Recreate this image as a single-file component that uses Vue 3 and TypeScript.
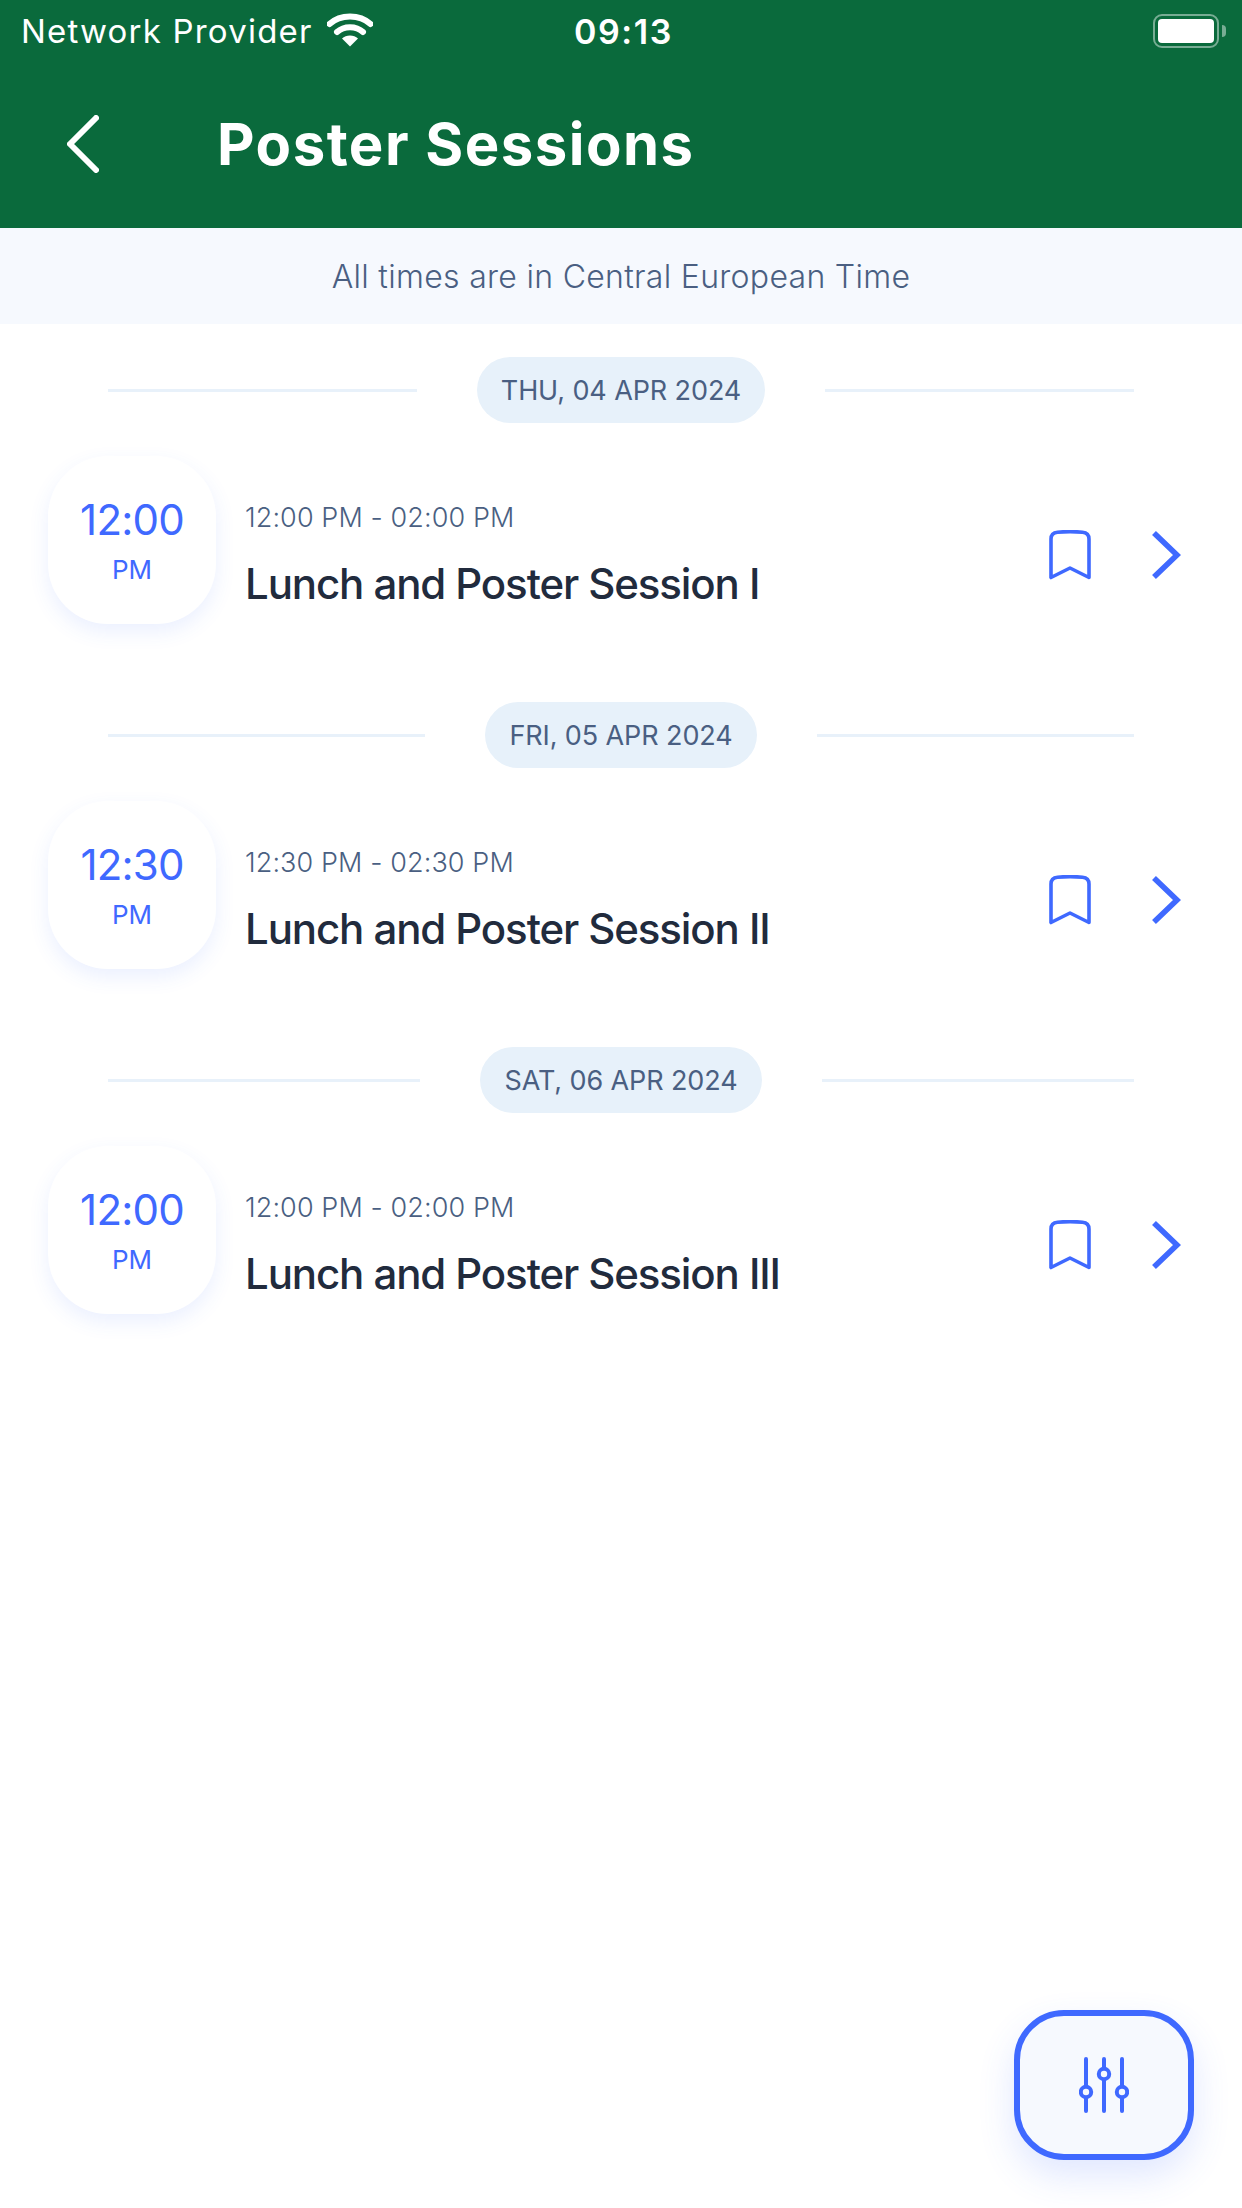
<script setup lang="ts">
interface Session {
  date: string
  hour: string
  range: string
  title: string
}
const sessions: Session[] = [
  { date: 'THU, 04 APR 2024', hour: '12:00', range: '12:00 PM - 02:00 PM', title: 'Lunch and Poster Session I' },
  { date: 'FRI, 05 APR 2024', hour: '12:30', range: '12:30 PM - 02:30 PM', title: 'Lunch and Poster Session II' },
  { date: 'SAT, 06 APR 2024', hour: '12:00', range: '12:00 PM - 02:00 PM', title: 'Lunch and Poster Session III' },
]
</script>

<template>
  <div class="page">
    <header class="header">
      <div class="status">
        <div class="status-left">
          <span class="provider">Network Provider</span>
          <svg class="wifi" width="46" height="34" viewBox="0 0 46 34" fill="none">
            <path d="M2.5 11C13.5 1 32.5 1 43.5 11" stroke="#fff" stroke-width="6" stroke-linecap="round" />
            <path d="M10 19C17 12.5 29 12.5 36 19" stroke="#fff" stroke-width="6" stroke-linecap="round" />
            <path d="M23 33.5L15 25.5C19 21.5 27 21.5 31 25.5Z" fill="#fff" />
          </svg>
        </div>
        <span class="clock">09:13</span>
        <div class="battery">
          <div class="battery-body"><div class="battery-fill"></div></div>
          <div class="battery-nub"></div>
        </div>
      </div>
      <div class="navbar">
        <svg class="back" width="32" height="58" viewBox="0 0 32 58" fill="none">
          <path d="M29 3L3 29L29 55" stroke="#fff" stroke-width="6" stroke-linecap="round" stroke-linejoin="round" />
        </svg>
        <h1 class="title">Poster Sessions</h1>
      </div>
    </header>

    <div class="notice">All times are in Central European Time</div>

    <main class="list">
      <section v-for="s in sessions" :key="s.date" class="group">
        <div class="separator">
          <span class="rule"></span>
          <span class="pill">{{ s.date }}</span>
          <span class="rule"></span>
        </div>
        <div class="row">
          <div class="tile">
            <span class="tile-hour">{{ s.hour }}</span>
            <span class="tile-mer">PM</span>
          </div>
          <div class="info">
            <span class="range">{{ s.range }}</span>
            <span class="name">{{ s.title }}</span>
          </div>
          <div class="actions">
            <svg width="42" height="50" viewBox="0 0 42 50" fill="none">
              <path d="M2 47.5V9C2 4.5 4.5 2.5 8.5 2.2C16 1.5 26 1.5 33.5 2.2C37.5 2.5 40 4.5 40 9V47.5L21 38Z" stroke="#3F69FF" stroke-width="3.6" stroke-linejoin="round" />
            </svg>
            <svg width="30" height="50" viewBox="0 0 30 50" fill="none">
              <path d="M3 3L26 25L3 47" stroke="#3F69FF" stroke-width="5.6" />
            </svg>
          </div>
        </div>
      </section>
    </main>

    <button class="fab" type="button" aria-label="Filter">
      <svg width="50" height="58" viewBox="0 0 50 58" fill="none" stroke="#3F69FF" stroke-width="4" stroke-linecap="round">
        <path d="M7 3V30M7 42V55M25 3V12M25 24V55M43 3V30M43 42V55" />
        <circle cx="7" cy="36" r="5.2" />
        <circle cx="25" cy="18" r="5.2" />
        <circle cx="43" cy="36" r="5.2" />
      </svg>
    </button>
  </div>
</template>

<style scoped>
.page {
  position: relative;
  width: 1242px;
  height: 2208px;
  background: #fff;
  overflow: hidden;
  font-family: "Inter", "Open Sans", sans-serif;
}
.header {
  height: 228px;
  background: #0a6a3c;
  color: #fff;
  font-family: "Inter", "Liberation Sans", sans-serif;
}
.status {
  display: grid;
  grid-template-columns: 1fr auto 1fr;
  align-items: center;
  height: 62px;
  padding: 0 16px 0 21px;
}
.status-left {
  display: flex;
  align-items: center;
  gap: 14px;
}
.provider {
  font-size: 33px;
  letter-spacing: 1.2px;
}
.wifi {
  margin-top: -2px;
}
.clock {
  font-size: 34px;
  font-weight: 600;
  letter-spacing: 1.6px;
}
.battery {
  display: flex;
  align-items: center;
  justify-content: flex-end;
  gap: 3px;
}
.battery-body {
  width: 66px;
  height: 34px;
  box-sizing: border-box;
  border: 2.5px solid rgba(255, 255, 255, 0.45);
  border-radius: 9px;
  padding: 3px;
}
.battery-fill {
  height: 100%;
  background: #fff;
  border-radius: 4px;
}
.battery-nub {
  width: 4px;
  height: 12px;
  background: rgba(255, 255, 255, 0.45);
  border-radius: 0 4px 4px 0;
}
.navbar {
  display: flex;
  align-items: center;
  height: 164px;
  padding: 0 0 0 67px;
  gap: 118px;
}
.title {
  margin: 0;
  font-size: 58px;
  font-weight: 700;
  letter-spacing: 1.5px;
  line-height: 1;
}
.notice {
  display: flex;
  align-items: center;
  justify-content: center;
  height: 96px;
  background: #f6f9fe;
  color: #4a5f82;
  font-size: 32px;
  font-weight: 300;
  letter-spacing: 0.3px;
}
.list {
  display: flex;
  flex-direction: column;
  padding-top: 33px;
  gap: 78px;
}
.group {
  display: flex;
  flex-direction: column;
  gap: 33px;
}
.separator {
  display: flex;
  align-items: center;
  gap: 60px;
  padding: 0 108px;
}
.rule {
  flex: 1;
  height: 3px;
  background: #e8f1fa;
}
.pill {
  display: flex;
  align-items: center;
  height: 66px;
  padding: 0 24px;
  border-radius: 33px;
  background: #e7f1fa;
  color: #4a5f82;
  font-size: 27px;
  font-weight: 400;
  letter-spacing: -0.1px;
}
.row {
  display: flex;
  align-items: center;
  height: 168px;
  padding: 0 0 0 48px;
}
.tile {
  display: flex;
  flex-direction: column;
  align-items: center;
  justify-content: center;
  width: 168px;
  height: 168px;
  border-radius: 60px;
  background: #fff;
  box-shadow: 0 8px 20px rgba(63, 105, 255, 0.1);
  color: #3f69ff;
}
.tile-hour {
  font-size: 42px;
  line-height: 54px;
  letter-spacing: -0.8px;
}
.tile-mer {
  margin-top: 6px;
  font-size: 26px;
  line-height: 34px;
}
.info {
  display: flex;
  flex: 1;
  flex-direction: column;
  margin: 30px 0 0 29px;
  gap: 24px;
}
.range {
  color: #4a5f82;
  font-size: 27px;
  font-weight: 300;
  line-height: 34px;
  letter-spacing: 0.1px;
}
.name {
  color: #212b3d;
  font-size: 42px;
  font-weight: 500;
  line-height: 50px;
  letter-spacing: -1.1px;
}
.actions {
  display: flex;
  align-items: center;
  gap: 60px;
  margin: 30px 61px 0 0;
}
.fab {
  position: absolute;
  left: 1014px;
  top: 2010px;
  display: flex;
  align-items: center;
  justify-content: center;
  width: 180px;
  height: 150px;
  padding: 0;
  box-sizing: border-box;
  border: 6px solid #3f69ff;
  border-radius: 50px;
  background: #f6f9fe;
  box-shadow: 0 16px 36px rgba(63, 105, 255, 0.16);
}
</style>
